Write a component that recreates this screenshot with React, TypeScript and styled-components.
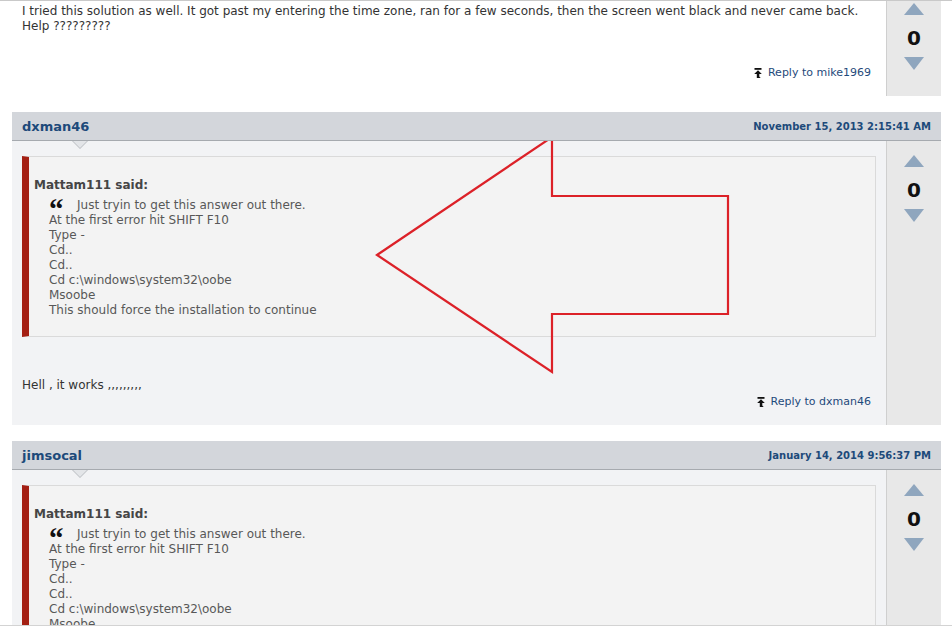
import React from "react";
import styled, { createGlobalStyle } from "styled-components";

const GlobalStyle = createGlobalStyle`
  html, body { margin: 0; padding: 0; background: #ffffff; }
  body {
    font-family: "DejaVu Sans", Verdana, sans-serif;
    font-size: 12px;
    color: #333333;
  }
`;

const Viewport = styled.div`
  position: relative;
  height: 626px;
  box-sizing: border-box;
  border-top: 1px solid #c9c9c9;
  border-bottom: 1px solid #d3d3d3;
  overflow: hidden;
`;

const Thread = styled.div`
  display: flex;
  flex-direction: column;
  gap: 16px;
  padding: 0 11px 0 12px;
  margin-top: -12px;
`;

const Post = styled.article`
  display: flex;
  flex-direction: column;
`;

const PostHeader = styled.header`
  position: relative;
  height: 28px;
  display: flex;
  align-items: center;
  justify-content: space-between;
  padding: 0 10px;
  background: #d3d6db;
  border-bottom: 1px solid #a6aaaf;
  z-index: 1;

  &::before {
    content: "";
    position: absolute;
    left: 60px;
    top: calc(100% + 1px);
    border-left: 8px solid transparent;
    border-right: 8px solid transparent;
    border-top: 8px solid #b7bbc0;
  }
  &::after {
    content: "";
    position: absolute;
    left: 61px;
    top: calc(100% + 1px);
    border-left: 7px solid transparent;
    border-right: 7px solid transparent;
    border-top: 7px solid #e3e5e8;
  }
`;

const Username = styled.a`
  font-weight: bold;
  font-size: 13px;
  color: #1d4a7a;
  text-decoration: none;
`;

const PostDate = styled.span`
  font-weight: bold;
  font-size: 10px;
  color: #1d4a7a;
`;

const PostBody = styled.div<{ $plain?: boolean }>`
  display: grid;
  grid-template-columns: minmax(0, 1fr) 55px;
  min-height: 107px;
  background: ${(p) => (p.$plain ? "#ffffff" : "#f2f3f5")};
`;

const Main = styled.div`
  display: flex;
  flex-direction: column;
  padding: 15px 10px 0 10px;
`;

const Message = styled.div<{ $gap?: number }>`
  line-height: 15px;
  color: #333333;
  margin-top: ${(p) => p.$gap ?? 0}px;
`;

const QuoteBox = styled.blockquote`
  margin: 0;
  background: #f3f3f3;
  border: 1px solid #dadada;
  border-left: 7px solid #a42014;
  padding: 20px 10px 18px 5px;
`;

const QuoteAuthor = styled.div`
  font-weight: bold;
  font-size: 12px;
  line-height: 16px;
  color: #454545;
`;

const QuoteText = styled.div`
  margin: 5px 0 0 15px;
  color: #585858;
  line-height: 15px;
`;

const QuoteLine = styled.div`
  white-space: nowrap;
`;

const QuoteMark = styled.span`
  display: inline-block;
  width: 28px;
  height: 15px;
  overflow: visible;
  vertical-align: top;
  position: relative;
  top: 4px;
  font-family: "Liberation Serif", "Times New Roman", serif;
  font-weight: bold;
  font-size: 29px;
  line-height: 15px;
  color: #111111;
`;

const ReplyRow = styled.div`
  margin-top: auto;
  display: flex;
  justify-content: flex-end;
  padding: 1px 5px 16px 0;
  line-height: 15px;
`;

const ReplyLink = styled.a`
  display: inline-flex;
  align-items: center;
  gap: 6px;
  font-size: 11px;
  color: #1f4a7b;
  text-decoration: none;
`;

const VoteColumn = styled.div`
  display: flex;
  flex-direction: column;
  align-items: center;
  padding-top: 14px;
  background: #e8e8e8;
  border-left: 1px solid #cfcfcf;
`;

const VoteArrow = styled.span<{ $dir: "up" | "down" }>`
  display: block;
  width: 0;
  height: 0;
  border-left: 10px solid transparent;
  border-right: 10px solid transparent;
  ${(p) =>
    p.$dir === "up"
      ? "border-bottom: 12px solid #8fa6be;"
      : "border-top: 13px solid #8fa6be;"}
`;

const Score = styled.div`
  font-weight: bold;
  font-size: 20px;
  line-height: 24px;
  color: #111111;
  margin: 11px 0 7px;
`;

const Annotation = styled.svg`
  position: absolute;
  left: 0;
  top: -1px;
  pointer-events: none;
`;

const ReplyIcon = () => (
  <svg width="8" height="10" viewBox="0 0 8 10" aria-hidden="true">
    <rect x="0.5" y="0" width="7" height="1.8" fill="#111" />
    <path d="M4 2.2 L7.8 6 H5.3 V8.3 Q5.3 9.4 6.4 9.4 V10 H2.8 V6 H0.2 Z" fill="#111" />
  </svg>
);

const Votes = () => (
  <VoteColumn>
    <VoteArrow $dir="up" />
    <Score>0</Score>
    <VoteArrow $dir="down" />
  </VoteColumn>
);

const quoteLines = [
  "At the first error hit SHIFT F10",
  "Type -",
  "Cd..",
  "Cd..",
  "Cd c:\\windows\\system32\\oobe",
  "Msoobe",
  "This should force the installation to continue",
];

const Quote = () => (
  <QuoteBox>
    <QuoteAuthor>Mattam111 said:</QuoteAuthor>
    <QuoteText>
      <QuoteLine>
        <QuoteMark>“</QuoteMark>Just tryin to get this answer out there.
      </QuoteLine>
      {quoteLines.map((l, i) => (
        <QuoteLine key={i}>{l}</QuoteLine>
      ))}
    </QuoteText>
  </QuoteBox>
);

const Reply = ({ to }: { to: string }) => (
  <ReplyRow>
    <ReplyLink href="#">
      <ReplyIcon />
      Reply to {to}
    </ReplyLink>
  </ReplyRow>
);

export default function App() {
  return (
    <>
      <GlobalStyle />
      <Viewport>
        <Thread>
          <Post>
            <PostBody $plain>
              <Main>
                <Message>
                  I tried this solution as well. It got past my entering the time zone, ran for a few seconds, then the screen went black and never came back.
                  <br />
                  Help ?????????
                </Message>
                <Reply to="mike1969" />
              </Main>
              <Votes />
            </PostBody>
          </Post>

          <Post>
            <PostHeader>
              <Username href="#">dxman46</Username>
              <PostDate>November 15, 2013 2:15:41 AM</PostDate>
            </PostHeader>
            <PostBody>
              <Main>
                <Quote />
                <Message $gap={41}>Hell , it works ,,,,,,,,,</Message>
                <Reply to="dxman46" />
              </Main>
              <Votes />
            </PostBody>
          </Post>

          <Post>
            <PostHeader>
              <Username href="#">jimsocal</Username>
              <PostDate>January 14, 2014 9:56:37 PM</PostDate>
            </PostHeader>
            <PostBody>
              <Main>
                <Quote />
                <Message $gap={41}>Worked for me too, thanks.</Message>
                <Reply to="jimsocal" />
              </Main>
              <Votes />
            </PostBody>
          </Post>
        </Thread>

        <Annotation width="952" height="632" viewBox="0 0 952 632">
          <polygon
            points="377,255 552,137 552,196 728,196 728,314 552,314 552,372"
            fill="none"
            stroke="#dc2128"
            strokeWidth="2.2"
            strokeLinejoin="miter"
          />
        </Annotation>
      </Viewport>
    </>
  );
}
